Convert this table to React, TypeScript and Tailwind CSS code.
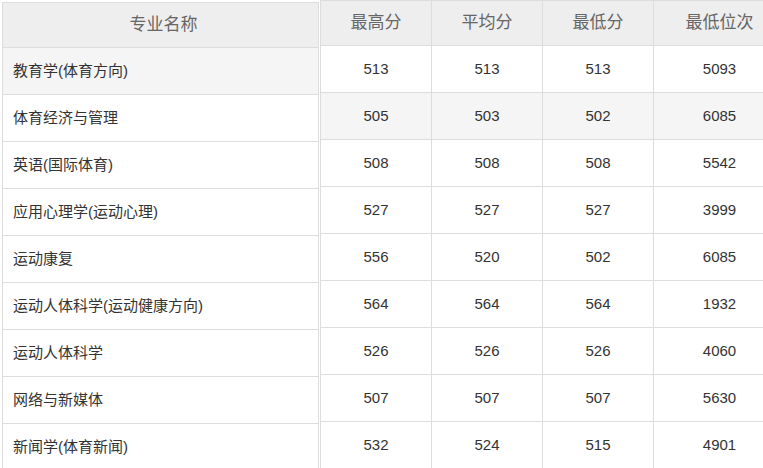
import React from "react";

const rows: [string, string, string, string, string][] = [
  ["教育学(体育方向)", "513", "513", "513", "5093"],
  ["体育经济与管理", "505", "503", "502", "6085"],
  ["英语(国际体育)", "508", "508", "508", "5542"],
  ["应用心理学(运动心理)", "527", "527", "527", "3999"],
  ["运动康复", "556", "520", "502", "6085"],
  ["运动人体科学(运动健康方向)", "564", "564", "564", "1932"],
  ["运动人体科学", "526", "526", "526", "4060"],
  ["网络与新媒体", "507", "507", "507", "5630"],
  ["新闻学(体育新闻)", "532", "524", "515", "4901"],
];

const font = { fontFamily: '"Liberation Sans", "Noto Sans CJK SC", sans-serif' };

export default function App() {
  return (
    <div
      className="w-[763px] h-[468px] overflow-hidden bg-white flex items-start"
      style={font}
    >
      {/* Left table */}
      <div className="ml-[2px] mt-[2px] w-[317px] shrink-0 border-l border-r border-[#dddddd] flex flex-col">
        <div className="h-[46px] border-t border-b border-[#dddddd] bg-[#eeeeee] flex items-center justify-center text-[17px] text-[#666666] pl-[6px]">
          专业名称
        </div>
        {rows.map((r, i) => (
          <div
            key={i}
            className={`h-[47px] shrink-0 border-b border-[#dddddd] flex items-center pl-[10px] text-[15px] text-[#333333] ${
              i === 0 ? "bg-[#f5f5f5]" : "bg-white"
            }`}
          >
            {r[0]}
          </div>
        ))}
      </div>

      {/* Right table */}
      <div className="ml-[1px] shrink-0 flex flex-col">
        <div className="h-[46px] border-t border-b border-[#dddddd] bg-[#eeeeee] grid grid-cols-[111px_111px_111px_132px] text-[17px] text-[#666666]">
          {["最高分", "平均分", "最低分", "最低位次"].map((h) => (
            <div key={h} className="border-l border-[#dddddd] flex items-center justify-center">
              {h}
            </div>
          ))}
        </div>
        {rows.map((r, i) => (
          <div
            key={i}
            className={`h-[47px] shrink-0 border-b border-[#dddddd] grid grid-cols-[111px_111px_111px_132px] text-[15px] text-[#333333] ${
              i === 1 ? "bg-[#f5f5f5]" : "bg-white"
            }`}
          >
            {r.slice(1).map((v, j) => (
              <div key={j} className="border-l border-[#dddddd] flex items-center justify-center">
                {v}
              </div>
            ))}
          </div>
        ))}
      </div>
    </div>
  );
}
